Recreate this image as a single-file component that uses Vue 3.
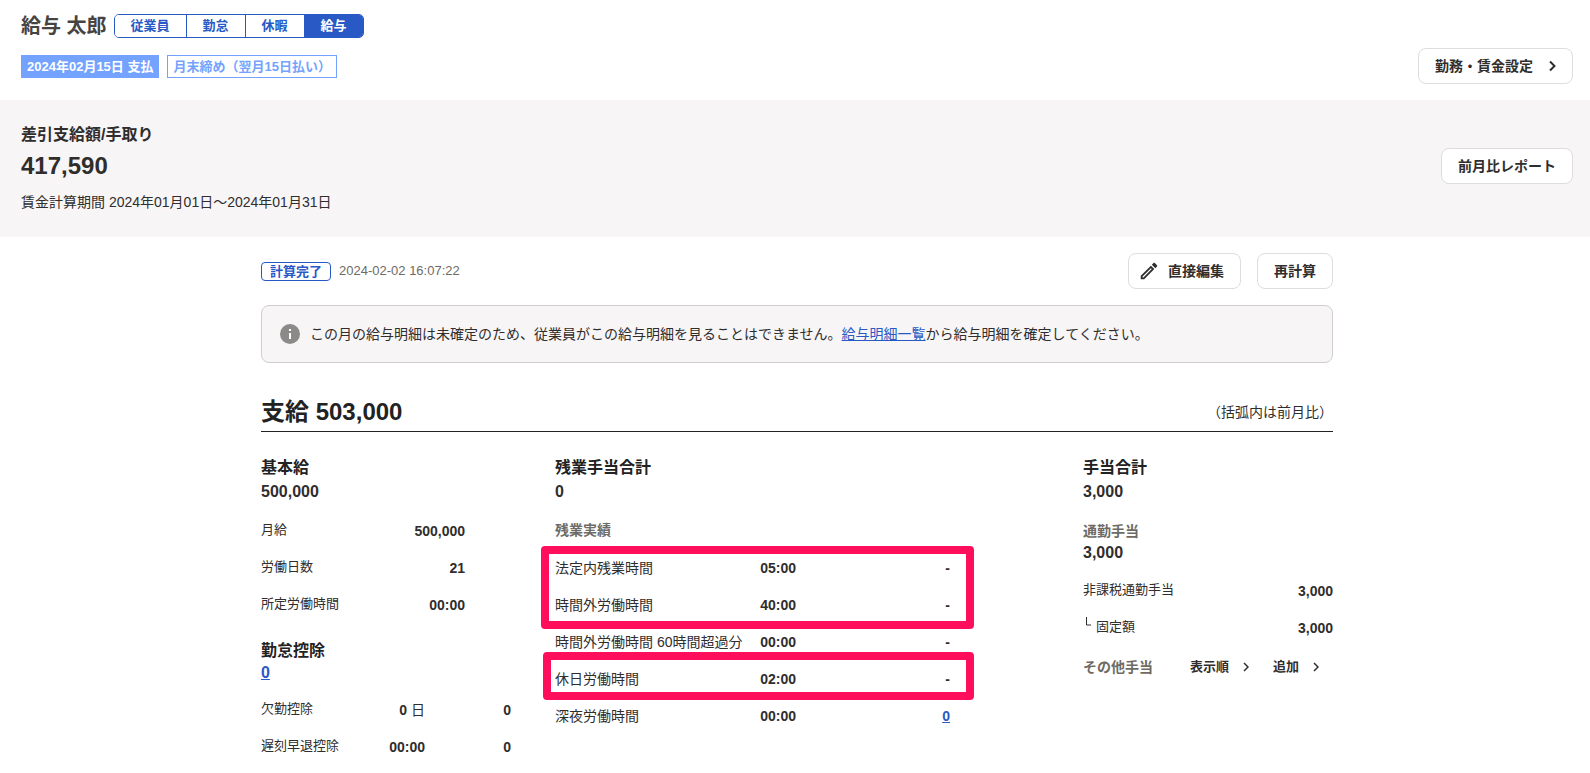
<script setup>

import { ref } from 'vue';


// top tabs
const tabs = ref(['従業員', '勤怠', '休暇', '給与']);
const activeTab = ref('給与');

const changeTab = (tab) => {
  activeTab.value = tab;
}

// 基本給
const baseRows = ref([
  { name: '月給', value: '500,000' },
  { name: '労働日数', value: '21' },
  { name: '所定労働時間', value: '00:00' },
]);

// 勤怠控除
const deductionRows = ref([
  { name: '欠勤控除', value: '0', unit: '日', amount: '0' },
  { name: '遅刻早退控除', value: '00:00', unit: '', amount: '0' },
]);

// 残業実績
const overtimeRows = ref([
  { name: '法定内残業時間', value: '05:00', amount: '-' },
  { name: '時間外労働時間', value: '40:00', amount: '-' },
  { name: '時間外労働時間 60時間超過分', value: '00:00', amount: '-' },
  { name: '休日労働時間', value: '02:00', amount: '-' },
  { name: '深夜労働時間', value: '00:00', amount: '0', link: true },
]);

// 通勤手当
const allowanceRows = ref([
  { name: '非課税通勤手当', value: '3,000' },
  { name: '固定額', value: '3,000', child: true },
]);

const otherActions = ref(['表示順', '追加']);

</script>

<template>

  <div class="page">

    <header class="header">
      <div>
        <div class="person">
          <h1>給与 太郎</h1>
          <nav class="tabs">
            <button v-for="tab in tabs" :key="tab" type="button" :class="{ active: tab === activeTab }"
              @click="changeTab(tab)">{{ tab }}</button>
          </nav>
        </div>
        <div class="labels">
          <span class="label filled">2024年02月15日 支払</span>
          <span class="label">月末締め（翌月15日払い）</span>
        </div>
      </div>
      <button type="button" class="btn">
        勤務・賃金設定
        <svg class="chevron" width="7" height="12" viewBox="0 0 7 12">
          <path d="M1 1.5 L5.5 6 L1 10.5" />
        </svg>
      </button>
    </header>

    <section class="summary">
      <div>
        <h2>差引支給額/手取り</h2>
        <p class="net">417,590</p>
        <p class="period">賃金計算期間 2024年01月01日～2024年01月31日</p>
      </div>
      <button type="button" class="btn">前月比レポート</button>
    </section>

    <main class="content">
      <div class="container">

        <div class="toolbar">
          <div class="status">
            <span class="done">計算完了</span>
            <time>2024-02-02 16:07:22</time>
          </div>
          <div class="actions">
            <button type="button" class="btn edit">
              <svg width="22" height="22" viewBox="0 0 24 24">
                <path fill="currentColor"
                  d="M14.06 9.02l.92.92L5.92 19H5v-.92l9.06-9.06M17.66 3c-.25 0-.51.1-.7.29l-1.83 1.83 3.75 3.75 1.83-1.83c.39-.39.39-1.02 0-1.41l-2.34-2.34c-.2-.2-.45-.29-.71-.29zm-3.6 3.19L3 17.25V21h3.75L17.81 9.94l-3.75-3.75z" />
              </svg>
              直接編集
            </button>
            <button type="button" class="btn">再計算</button>
          </div>
        </div>

        <div class="notice">
          <svg width="20" height="20" viewBox="0 0 20 20">
            <circle cx="10" cy="10" r="10" fill="#8c8989" />
            <path d="M9 5h2v2H9zM9 9h2v6H9z" fill="#fff" />
          </svg>
          <p>この月の給与明細は未確定のため、従業員がこの給与明細を見ることはできません。<a href="#">給与明細一覧</a>から給与明細を確定してください。</p>
        </div>

        <div class="heading">
          <h2>支給 503,000</h2>
          <span>（括弧内は前月比）</span>
        </div>

        <div class="columns">

          <section>
            <h3>基本給</h3>
            <p class="total">500,000</p>
            <table class="base small">
              <tbody>
                <tr v-for="row in baseRows" :key="row.name">
                  <th>{{ row.name }}</th>
                  <td>{{ row.value }}</td>
                </tr>
              </tbody>
            </table>

            <h3 class="next">勤怠控除</h3>
            <p class="total tight"><a href="#">0</a></p>
            <table class="deduction small">
              <tbody>
                <tr v-for="row in deductionRows" :key="row.name">
                  <th>{{ row.name }}</th>
                  <td class="mid">{{ row.value }}<span v-if="row.unit" class="unit">&nbsp;{{ row.unit }}</span></td>
                  <td>{{ row.amount }}</td>
                </tr>
              </tbody>
            </table>
          </section>

          <section>
            <h3>残業手当合計</h3>
            <p class="total">0</p>
            <h4 class="row-title">残業実績</h4>
            <div class="marked">
              <table class="overtime">
                <tbody>
                  <tr v-for="row in overtimeRows" :key="row.name">
                    <th>{{ row.name }}</th>
                    <td class="mid">{{ row.value }}</td>
                    <td>
                      <a v-if="row.link" href="#">{{ row.amount }}</a>
                      <template v-else>{{ row.amount }}</template>
                    </td>
                  </tr>
                </tbody>
              </table>
              <!-- red frames over the rows -->
              <div class="frame first"></div>
              <div class="frame second"></div>
            </div>
          </section>

          <section>
            <h3>手当合計</h3>
            <p class="total">3,000</p>
            <h4>通勤手当</h4>
            <p class="sub-total">3,000</p>
            <table class="allowance small">
              <tbody>
                <tr v-for="row in allowanceRows" :key="row.name">
                  <th>
                    <svg v-if="row.child" class="branch" width="7" height="10" viewBox="0 0 7 10">
                      <path d="M1.5 0 V8 H6" />
                    </svg>{{ row.name }}
                  </th>
                  <td>{{ row.value }}</td>
                </tr>
              </tbody>
            </table>
            <div class="other">
              <h4>その他手当</h4>
              <button v-for="action in otherActions" :key="action" type="button">
                {{ action }}
                <svg class="chevron" width="6" height="10" viewBox="0 0 6 10">
                  <path d="M1 1 L5 5 L1 9" />
                </svg>
              </button>
            </div>
          </section>

        </div>
      </div>
    </main>

  </div>

</template>

<style>
body {
  background: #fff;
}
</style>

<style scoped>
.page {
  color: #302d2d;
  font-family: "Liberation Sans", "Noto Sans CJK JP", sans-serif;
  font-size: 14px;
  line-height: 20px;
}

h1,
h2,
h3,
h4,
p {
  margin: 0;
}

button {
  font-family: inherit;
  cursor: pointer;
}

a {
  color: #2859c5;
}

/* Header */
.header {
  display: flex;
  justify-content: space-between;
  align-items: flex-end;
  padding: 14px 17px 16px 21px;
}

.person {
  display: flex;
  align-items: center;
  gap: 7px;
}

h1 {
  font-size: 20px;
  line-height: 24px;
  color: #464343;
}

.tabs {
  display: flex;
  border: 1px solid #2859c5;
  border-radius: 5px;
  overflow: hidden;
}

.tabs button {
  padding: 0 16px;
  border: none;
  background: #fff;
  color: #2859c5;
  font-size: 13px;
  font-weight: bold;
  line-height: 22px;
}

.tabs button + button {
  border-left: 1px solid #2859c5;
}

.tabs button.active {
  background: #2859c5;
  color: #fff;
}

.labels {
  display: flex;
  gap: 8px;
  margin: 17px 0 6px;
}

.label {
  padding: 0 5px;
  border: 1px solid #73a3ff;
  color: #73a3ff;
  font-size: 13px;
  font-weight: bold;
  line-height: 21px;
}

.label.filled {
  background: #73a3ff;
  color: #fff;
}

.btn {
  display: flex;
  align-items: center;
  gap: 16px;
  height: 36px;
  padding: 0 16px;
  border: 1px solid #dedcdc;
  border-radius: 8px;
  background: #fff;
  color: #302d2d;
  font-size: 14px;
  font-weight: bold;
  line-height: 20px;
}

.btn.edit {
  gap: 8px;
  padding-left: 9px;
}

.chevron {
  fill: none;
  stroke: #302d2d;
  stroke-width: 2;
}

/* Summary */
.summary {
  display: flex;
  justify-content: space-between;
  align-items: center;
  padding: 20px 17px 25px 21px;
  background: #f7f5f6;
}

.summary h2 {
  font-size: 16px;
  line-height: 30px;
}

.net {
  font-size: 24px;
  font-weight: bold;
  line-height: 32px;
}

.period {
  margin-top: 10px;
}

/* Content */
.content {
  padding: 16px 17px 8px 21px;
}

.container {
  max-width: 1072px;
  margin: 0 auto;
}

.toolbar,
.status,
.actions {
  display: flex;
  align-items: center;
}

.toolbar {
  justify-content: space-between;
}

.status {
  gap: 8px;
}

.actions {
  gap: 16px;
}

.done {
  padding: 0 8px;
  border: 1px solid #2859c5;
  border-radius: 4px;
  color: #2859c5;
  font-size: 13px;
  font-weight: bold;
  line-height: 17px;
}

time {
  color: #6e6b65;
  font-size: 13px;
}

.notice {
  display: flex;
  align-items: center;
  gap: 10px;
  margin-top: 16px;
  padding: 18px;
  border: 1px solid #d0cdce;
  border-radius: 8px;
  background: #f7f5f6;
}

.notice svg {
  flex: none;
}

.heading {
  display: flex;
  justify-content: space-between;
  align-items: center;
  margin-top: 32px;
  padding-bottom: 2px;
  border-bottom: 1px solid #232222;
}

.heading h2 {
  color: #232222;
  font-size: 24px;
  line-height: 34px;
}

.columns {
  display: grid;
  grid-template-columns: 250px 1fr 250px;
  gap: 44px;
  margin-top: 24px;
}

h3 {
  color: #232222;
  font-size: 16px;
  line-height: 24px;
}

h3.next {
  margin-top: 16px;
}

.total,
.sub-total {
  font-size: 16px;
  font-weight: bold;
  line-height: 24px;
}

.total {
  margin-bottom: 8px;
}

.total.tight {
  line-height: 20px;
}

h4 {
  margin-top: 16px;
  color: #6e6b65;
  font-size: 14px;
  line-height: 22px;
}

.sub-total {
  margin-bottom: 8px;
  line-height: 22px;
}

h4.row-title {
  margin-top: 8px;
  line-height: 37px;
}

/* Tables */
table {
  width: 100%;
  border-collapse: collapse;
}

tr {
  height: 37px;
}

th,
td {
  padding: 0;
  vertical-align: middle;
  white-space: nowrap;
}

th {
  font-weight: normal;
  text-align: left;
}

td {
  font-weight: bold;
  text-align: right;
}

.small th {
  padding-bottom: 2px;
  font-size: 13px;
}

.base {
  max-width: 204px;
}

.deduction .mid {
  width: 40px;
}

.deduction td:last-child {
  width: 86px;
}

.unit {
  font-weight: normal;
}

.marked {
  position: relative;
  max-width: 395px;
}

.overtime .mid {
  width: 40px;
}

.overtime td:last-child {
  width: 154px;
}

.frame {
  position: absolute;
  right: -24px;
  border: 8px solid #ff0f5b;
  border-radius: 4px;
  pointer-events: none;
}

.frame.first {
  top: -3px;
  left: -14px;
  height: 67px;
}

.frame.second {
  top: 103px;
  left: -12px;
  height: 32px;
}

.branch {
  margin: 0 4px 4px 2px;
  fill: none;
  stroke: #302d2d;
  stroke-width: 1;
}

.other {
  display: flex;
  align-items: center;
  height: 42px;
}

.other h4 {
  flex: 1;
  margin: 0;
}

.other button {
  display: flex;
  align-items: center;
  gap: 14px;
  margin-left: 24px;
  padding: 0;
  border: none;
  background: none;
  color: #302d2d;
  font-size: 13px;
  font-weight: bold;
  line-height: 20px;
}

.other button .chevron {
  stroke-width: 1.5;
}

.other button:last-child {
  margin-right: 14px;
}
</style>
